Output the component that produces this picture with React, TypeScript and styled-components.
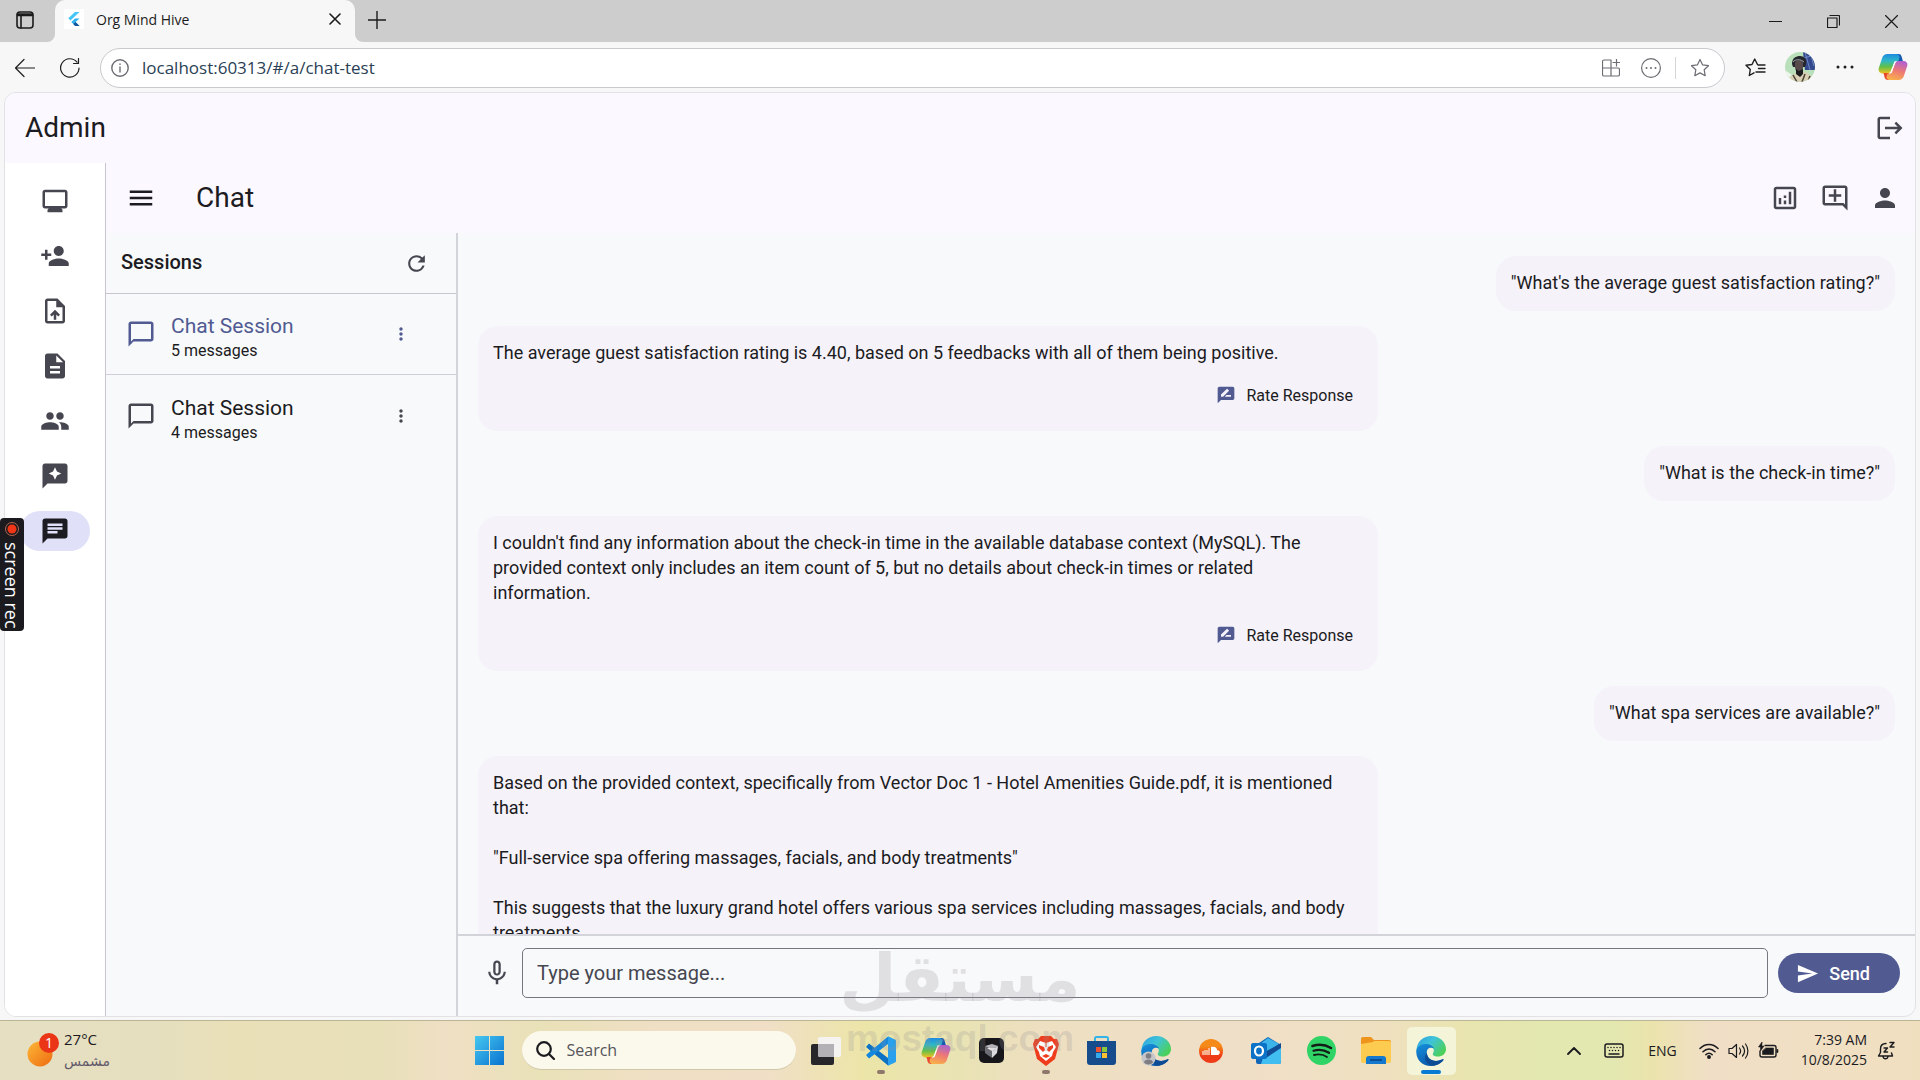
import React from "react";
import styled, { createGlobalStyle, css } from "styled-components";
import {
  MdMonitor, MdPersonAdd, MdUploadFile, MdDescription, MdPeople, MdReviews, MdChat, MdMenu, MdLogout,
  MdOutlineAnalytics, MdOutlineAddComment, MdPerson, MdRefresh, MdChatBubbleOutline, MdMoreVert,
  MdRateReview, MdMicNone, MdSend,
} from "react-icons/md";

const ui = `"Open Sans", "Noto Sans", sans-serif`;
const roboto = `Roboto, "Open Sans", sans-serif`;

const Global = createGlobalStyle`
  *, *::before, *::after { box-sizing: border-box; }
  html, body, #root { height: 100%; margin: 0; }
  body { overflow: hidden; background: #f7f7f7; }
  button { border: 0; padding: 0; background: none; color: inherit; font: inherit; cursor: pointer; }
  h1, h2, p { margin: 0; font-weight: 400; }
  ul { margin: 0; padding: 0; list-style: none; }
  svg { display: block; flex: none; }
`;

const Desktop = styled.div`
  position: relative;
  height: 100vh;
  display: flex;
  flex-direction: column;
  font-family: ${ui};
`;

/* ---------- browser chrome ---------- */
const TabStrip = styled.header`
  display: flex;
  height: 42px;
  flex: none;
  background: #cdcdcd;
  color: #1b1b1b;
`;
const IconButton = styled.button<{ $w?: number; $h?: number }>`
  display: grid;
  place-items: center;
  flex: none;
  width: ${(p) => p.$w ?? 40}px;
  height: ${(p) => p.$h ?? 40}px;
`;
const StripLeft = styled.div<{ $grow?: boolean }>`
  display: flex;
  background: #cdcdcd;
  flex: ${(p) => (p.$grow ? "1" : "none")};
  padding-right: ${(p) => (p.$grow ? 0 : 5)}px;
  border-radius: ${(p) => (p.$grow ? "0 0 0 8px" : "0 0 8px 0")};
`;
const TabBack = styled.div`
  display: flex;
  flex: 1;
  background: linear-gradient(#cdcdcd 50%, #f7f7f7 50%);
`;
const Tab = styled.div`
  display: flex;
  align-items: center;
  width: 300px;
  padding: 0 8px 4px 9px;
  border-radius: 10px 10px 0 0;
  background: #f7f7f7;
  font-size: 14px;
`;
const TabTitle = styled.span`
  flex: 1;
  margin-left: 12px;
`;
const Favicon = styled.span`
  display: grid;
  place-items: center;
  width: 20px;
  height: 20px;
  background: #fff;
`;
const WindowButtons = styled.div`
  display: flex;
  margin-left: auto;
`;
const Toolbar = styled.div`
  display: flex;
  align-items: center;
  flex: none;
  height: 50px;
  padding-right: 9px;
  background: #f7f7f7;
  color: #1f1f1f;
`;
const Nav = styled.div`
  display: flex;
  align-items: center;
  gap: 5px;
  padding: 2px 5px 0;
  width: 100px;
`;
const Address = styled.div`
  display: flex;
  align-items: center;
  flex: 1;
  height: 40px;
  margin-top: 2px;
  padding: 0 4px 0 10px;
  border: 1px solid #c9c9ce;
  border-radius: 20px;
  background: #fff;
  color: #6c6c74;
`;
const Url = styled.input`
  flex: 1;
  min-width: 0;
  margin-left: 13px;
  padding: 0;
  border: 0;
  outline: 0;
  background: none;
  font: 17px/24px ${ui};
  color: #2a3f55;
`;
const Divider = styled.span`
  width: 1px;
  height: 22px;
  margin: 0 4px;
  background: #d5d5d8;
`;

/* ---------- web page ---------- */
const Page = styled.main`
  display: flex;
  flex-direction: column;
  flex: 1;
  min-height: 0;
  margin: 0 4px 3px;
  border: 1px solid #e2e2e6;
  border-radius: 12px;
  overflow: hidden;
  background: #f7f9fb;
  font-family: ${roboto};
  color: #1b1b21;
`;
const AppBar = styled.header`
  display: flex;
  align-items: center;
  flex: none;
  height: 70px;
  background: #fbf8ff;
  color: #45464f;
`;
const Title = styled.h1`
  flex: 1;
  padding-bottom: 2px;
  font-size: 28px;
  line-height: 35px;
  color: #1b1b21;
`;
const AdminBar = styled(AppBar)`
  padding-left: 20px;
`;
const ChatBar = styled(AppBar)`
  padding: 0 5px 0 10px;
`;
const ChatTitle = styled(Title)`
  margin-left: 30px;
`;
const Body = styled.div`
  display: flex;
  flex: 1;
  min-height: 0;
`;
const Rail = styled.nav`
  flex: none;
  width: 101px;
  padding-top: 10px;
  border-right: 1px solid #c6c5d0;
  background: #fff;
`;
const RailItem = styled.li`
  display: flex;
  justify-content: center;
  height: 55px;
  align-items: center;
`;
const RailButton = styled.button<{ $active?: boolean }>`
  display: grid;
  place-items: center;
  width: 70px;
  height: 40px;
  border-radius: 20px;
  color: #45464f;
  ${(p) => p.$active && css`background: #e0e1f9; color: #1b1b21;`}
`;
const Workspace = styled.section`
  display: flex;
  flex-direction: column;
  flex: 1;
  min-width: 0;
`;
const Sessions = styled.aside`
  flex: none;
  width: 352px;
  border-right: 2px solid #d3d3da;
`;
const SessionsHead = styled.div`
  display: flex;
  align-items: center;
  justify-content: space-between;
  height: 61px;
  padding: 0 15px;
  border-bottom: 1px solid #c6c5d0;
  color: #45464f;
`;
const SessionsTitle = styled.h2`
  padding-bottom: 2px;
  font-size: 20px;
  font-weight: 500;
  color: #1b1b21;
`;
const Session = styled.li<{ $active?: boolean }>`
  display: flex;
  align-items: center;
  height: 81px;
  padding: 0 30px 0 20px;
  border-bottom: ${(p) => (p.$active ? "1px solid #cfced8" : "0")};
  color: ${(p) => (p.$active ? "#515b92" : "#45464f")};
`;
const SessionLink = styled.a<{ $active?: boolean }>`
  display: flex;
  flex: 1;
  flex-direction: column;
  margin-left: 15px;
  padding-top: 4px;
  font-size: 21px;
  line-height: 30px;
  text-decoration: none;
  color: ${(p) => (p.$active ? "#515b92" : "#1b1b21")};
`;
const Count = styled.span`
  font-size: 16px;
  line-height: 20px;
  color: #1b1b21;
`;
const Conversation = styled.div`
  display: flex;
  flex-direction: column;
  flex: 1;
  min-width: 0;
`;
const Messages = styled.div`
  display: flex;
  flex-direction: column;
  gap: 15px;
  flex: 1;
  min-height: 0;
  padding: 23px 20px 0;
  overflow: hidden;
`;
const Bubble = styled.article<{ $mine?: boolean }>`
  flex: none;
  align-self: ${(p) => (p.$mine ? "flex-end" : "flex-start")};
  width: ${(p) => (p.$mine ? "auto" : "900px")};
  max-width: 100%;
  padding: 14px ${(p) => (p.$mine ? 15 : 25)}px 16px 15px;
  border-radius: 20px;
  background: #f5f2fa;
  font-size: 18px;
  line-height: 25px;
  white-space: pre-wrap;
`;
const RateRow = styled.div`
  display: flex;
  justify-content: flex-end;
  height: 40px;
  margin-top: 10px;
`;
const RateButton = styled.button`
  display: flex;
  align-items: center;
  gap: 10px;
  font-size: 16px;
  color: #1b1b21;
  svg { color: #515b92; }
`;
const Composer = styled.form`
  display: flex;
  align-items: flex-start;
  flex: none;
  height: 82px;
  padding: 12px 15px 0 14px;
  border-top: 2px solid #d3d3da;
  color: #45464f;
`;
const MessageInput = styled.input`
  flex: 1;
  min-width: 0;
  height: 50px;
  margin-right: 10px;
  padding: 0 14px;
  border: 1px solid #767680;
  border-radius: 5px;
  outline: 0;
  background: none;
  font: 20px/28px ${roboto};
  &::placeholder { color: #45464f; opacity: 1; }
`;
const SendButton = styled.button`
  display: flex;
  align-items: center;
  gap: 10px;
  height: 40px;
  margin-top: 5px;
  padding: 0 30px 0 18px;
  border-radius: 20px;
  background: #515b92;
  color: #fff;
  font-size: 18px;
  font-weight: 500;
`;

/* ---------- taskbar ---------- */
const Taskbar = styled.footer`
  display: grid;
  grid-template-columns: 1fr auto 1fr;
  flex: none;
  height: 60px;
  border-top: 1px solid #b9b698;
  background: linear-gradient(90deg, #e6dfc2 0%, #e5dfbf 8%, #e9e0b8 12%, #e8e0b9 20%, #efdfc4 23%,
    #e9e1b8 28%, #efdfc4 34%, #f0dfc6 40%, #ece5a8 45%, #e9e3b4 50%, #eddfc0 54%, #f0dfc8 64%, #efe0c0 72%,
    #e9e4b0 76%, #e3e7b0 80%, #e3e7b0 84%, #ebe3ac 86%, #f0dfc6 89%, #f0dfbf 100%);
  color: #1b1b1f;
  font-size: 15px;
  line-height: 20px;
`;
const Weather = styled.button`
  display: flex;
  align-items: center;
  gap: 4px;
  justify-self: start;
  padding: 0 0 2px 26px;
  text-align: left;
`;
const WeatherText = styled.span`
  display: grid;
  line-height: 22px;
  color: #62596a;
  strong { font-weight: 400; color: #1b1b1f; }
  span { font-family: "DejaVu Sans", sans-serif; font-size: 14px; }
`;
const Dock = styled.div`
  display: flex;
  align-items: center;
`;
const AppButton = styled.button<{ $active?: boolean }>`
  display: grid;
  place-items: center;
  width: 49px;
  height: 48px;
  margin: 0 3px;
  border-radius: 5px;
  background: ${(p) => (p.$active ? "#f4f4d8" : "none")};
`;
const Running = styled.i<{ $active?: boolean }>`
  position: absolute;
  width: ${(p) => (p.$active ? 20 : 8)}px;
  height: 4px;
  margin-top: 43px;
  border-radius: 2px;
  background: ${(p) => (p.$active ? "#0a7bd4" : "#8d786b")};
`;
const SearchBox = styled.label`
  display: flex;
  align-items: center;
  gap: 12px;
  width: 274px;
  height: 39px;
  margin: 0 3px 0 5px;
  padding: 0 14px;
  border-radius: 20px;
  border-bottom: 1px solid #cfc8a8;
  background: #fbf8ec;
`;
const SearchInput = styled.input`
  flex: 1;
  min-width: 0;
  border: 0;
  padding: 0;
  outline: 0;
  background: none;
  font: 16px/22px ${ui};
  &::placeholder { color: #55555b; opacity: 1; }
`;
const Tray = styled.div`
  display: flex;
  align-items: center;
  justify-content: flex-end;
  padding-right: 24px;
`;
const TrayGroup = styled.button<{ $near?: boolean }>`
  display: flex;
  align-items: center;
  gap: 9px;
  margin-left: ${(p) => (p.$near ? 14 : 22)}px;
  font-size: 14px;
`;
const Clock = styled.time`
  margin-left: 22px;
  margin-right: 10px;
  padding-bottom: 2px;
  text-align: right;
  font-size: 14px;
`;

/* ---------- overlays ---------- */
const Recorder = styled.div`
  position: absolute;
  left: 0;
  top: 518px;
  display: flex;
  flex-direction: column;
  align-items: center;
  gap: 6px;
  width: 24px;
  padding: 4px 0;
  height: 113px;
  border-radius: 4px;
  background: #1b1b1f;
  color: #fff;
  font-size: 18px;
  line-height: 24px;
  span { writing-mode: vertical-rl; white-space: nowrap; }
`;
const Watermark = styled.div`
  position: absolute;
  left: 0;
  right: 0;
  bottom: 20px;
  pointer-events: none;
  text-align: center;
  color: rgba(150, 145, 150, 0.24);
`;
const WatermarkArabic = styled.div`
  font: 700 66px/78px "DejaVu Sans", sans-serif;
`;
const WatermarkLatin = styled.div`
  font: 700 37px/42px "Liberation Sans", sans-serif;
`;

/* ---------- drawings ---------- */
const Line = ({ w = 20, h = w, vb = "0 0 20 20", sw = 1.2, children }: any) => (
  <svg width={w} height={h} viewBox={vb} fill="none" stroke="currentColor" strokeWidth={sw} strokeLinecap="round" strokeLinejoin="round">{children}</svg>
);

const Copilot = ({ size = 30 }: { size?: number }) => (
  <svg width={size} height={size} viewBox="0 0 30 30">
    <defs>
      <linearGradient id="cpA" x1="0" y1="0" x2="0" y2="1"><stop offset="0" stopColor="#1e8be0" /><stop offset=".35" stopColor="#2fb7c8" /><stop offset=".65" stopColor="#5fc04a" /><stop offset="1" stopColor="#f6c021" /></linearGradient>
      <linearGradient id="cpB" x1=".6" y1="0" x2=".3" y2="1"><stop offset="0" stopColor="#b35fd0" /><stop offset=".5" stopColor="#ee7a72" /><stop offset="1" stopColor="#f9b04a" /></linearGradient>
    </defs>
    <path d="M17 2h3.500a3 3 0 0 1 3 2.200L25 9.500h-6z" fill="#1559b0" />
    <path d="M9.500 2h9a3 3 0 0 1 2.800 4l-1 3.500h-3.800L13 18.500a4 4 0 0 1-3.800 3H5.500c-4 0-5.500-2.500-4.700-5.500L4 6.500A6 6 0 0 1 9.500 2z" fill="url(#cpA)" />
    <path d="M12.500 28H9.500a3 3 0 0 1-2.800-2.200L5.500 21H11z" fill="#e8482b" />
    <path d="M20.500 28h-9a3 3 0 0 1-2.800-4l1-2.800h3.600L17 12a4 4 0 0 1 3.800-3h3.700c4 0 5.500 2 4.700 5l-3.200 9.500a6 6 0 0 1-5.500 4.500z" fill="url(#cpB)" />
    <path d="M16.800 9.500h2.400a3 3 0 0 0-2.600 2.500l-2.600 8a3 3 0 0 1-2.200 1.500h-1.200a3.500 3.500 0 0 0 2.700-2.700z" fill="#fff" />
  </svg>
);

const Edge = ({ person = false }: { person?: boolean }) => (
  <svg width="30" height="30" viewBox="0 0 30 30">
    <defs>
      <linearGradient id="egTop" x1="0" y1="0" x2="1" y2=".6"><stop offset="0" stopColor="#2b9fe0" /><stop offset=".5" stopColor="#3fc3d8" /><stop offset="1" stopColor="#4bd05a" /></linearGradient>
      <linearGradient id="egLow" x1="0" y1="0" x2=".5" y2="1"><stop offset="0" stopColor="#1590dc" /><stop offset="1" stopColor="#0b58ac" /></linearGradient>
    </defs>
    <path d="M.5 13C1.500 5 8 0 15 0c9 0 15 6.500 15 13 0 5-4 7.500-8 7.500-4 0-6-1.500-5-3.300 2-3 .500-6.700-4-6.700C7 10.500 2 12 .500 17z" fill="url(#egTop)" />
    <path d="M.3 16C.300 11 4.500 8 9.500 8c4 0 7.500 2 8.500 4.500-5-2-8 1-7 5.500 1 5 6 8 12 6.500 2-.500 4-1.500 4.500-1 .700.700-5 6.500-12.500 6.500C6.500 30 .300 24 .300 16z" fill="url(#egLow)" />
    <path d="M11 17c-.500 6.500 7 9.500 14 7 1.500-.600 2.800-1.200 2.500-.300-1 2-5 5.300-9.500 6C10 30 6.500 21 11 17z" fill="#0d4c94" />
    {person && <g><circle cx="7.500" cy="22.500" r="7" fill="#c5c5c8" /><circle cx="7.500" cy="20" r="2.800" fill="#7d7d83" /><path d="M3 26.500c0-4 9-4 9 0-2.500 2.500-6.500 2.500-9 0z" fill="#7d7d83" /></g>}
  </svg>
);

const Flutter = () => (
  <svg width="14" height="16" viewBox="0 0 14 16">
    <path d="M8 1h4.500L3.500 9.500 1.300 7.300z" fill="#45c5f5" />
    <path d="M8 7.500h4.500L8.500 11l4 4H8.200L4.300 11z" fill="#2fb0ee" />
    <path d="M6.300 13l2.200-2 4 4H8.200z" fill="#17569b" />
  </svg>
);

const Avatar = () => (
  <svg width="30" height="30" viewBox="0 0 30 30">
    <clipPath id="av"><circle cx="15" cy="15" r="15" /></clipPath>
    <g clipPath="url(#av)">
      <path d="M0 0h30v30H0z" fill="#b9dfbb" />
      <path d="M0 4l9-4M0 20l6 4" stroke="#eef6ec" strokeWidth="3" />
      <path d="M18 0h12v18H20z" fill="#34488c" />
      <path d="M20 0l5 18M25 0l4 14M18 6l12-3" stroke="#7088c8" />
      <path d="M3 30c1-6 5-8 9-9l8-1c5 2 7 5 7 10z" fill="#d8cfb4" />
      <path d="M8 23l4 7M20 22l-3 8M25 24l-2 5" stroke="#4a4238" strokeWidth="1.500" />
      <path d="M7 12c0-6 4-8 8-8 5 0 7 4 6 8l-1 3H8z" fill="#26272d" />
      <path d="M10 10c2-2 7-2 8 0v5c0 4-2 6-4 6s-4-3-4-6z" fill="#574b4c" />
      <path d="M8 10c2-3 8-3 11 0" stroke="#9ba8a8" fill="none" />
      <path d="M11 17l3 2 4-2v5l-3 3-4-3z" fill="#1c1c20" />
    </g>
  </svg>
);

const Windows = () => (
  <svg width="29" height="29" viewBox="0 0 29 29">
    <defs><linearGradient id="win" x1="0" y1="0" x2="29" y2="29" gradientUnits="userSpaceOnUse"><stop offset="0" stopColor="#45c8f0" /><stop offset="1" stopColor="#0a72d0" /></linearGradient></defs>
    <path d="M0 0h14v14H0zM15 0h14v14H15zM0 15h14v14H0zM15 15h14v14H15z" fill="url(#win)" />
  </svg>
);
const TaskView = () => (
  <svg width="30" height="28" viewBox="0 0 30 28">
    <rect y="7" width="23" height="21" rx="2" fill="#26262b" />
    <rect x="7" width="23" height="20" rx="2" fill="#f4f3f2" />
    <path d="M7 7h16v13H9a2 2 0 0 1-2-2z" fill="#b3b1b6" />
  </svg>
);
const VsCode = () => (
  <svg width="30" height="30" viewBox="0 0 30 30">
    <path d="M3 7.500L22 22v7.500L.800 11.800c-.700-.600-.700-1.200 0-1.800z" fill="#0d72c4" />
    <path d="M3 22.500L22 8V.500L.800 18.200c-.700.600-.700 1.200 0 1.800z" fill="#1388dc" />
    <path d="M22 .3l7 3.200c.700.300 1 .800 1 1.500v20c0 .700-.300 1.200-1 1.500l-7 3.200z" fill="#2ba0ec" />
  </svg>
);
const Cursor = () => (
  <svg width="25" height="25" viewBox="0 0 25 25">
    <rect width="25" height="25" rx="5" fill="#17171b" />
    <path d="M6 8l7-2 6 2-6 4z" fill="#b8b8be" /><path d="M6 8l7 4v8l-7-5z" fill="#6c6c74" /><path d="M19 8l-6 4v8l5-5z" fill="#dcdce0" /><path d="M8 10h9l-4 3z" fill="#f2f2f4" />
  </svg>
);
const Brave = () => (
  <svg width="26" height="30" viewBox="0 0 26 30">
    <path d="M8 0h10l3 3h3l2 5-1 4-3 11-9 7-9-7L1 12 0 8l2-5h3z" fill="#ee3c1c" />
    <path d="M7 5l6 2 6-2 4 6-3 5-1 4-6 5-6-5-1-4-3-5z" fill="#fff" />
    <path d="M6 9l5 2 1 3-2 2-4-4zM20 9l-5 2-1 3 2 2 4-4zM9 20l4-2 4 2-4 2z" fill="#ee3c1c" />
    <path d="M13 6v5" stroke="#ee3c1c" />
  </svg>
);
const Store = () => (
  <svg width="29" height="30" viewBox="0 0 29 30">
    <path d="M8 7V2.500C8 1.500 8.500 1 9.500 1h10c1 0 1.500.500 1.500 1.500V7" stroke="#32b4e8" strokeWidth="2" fill="none" />
    <path d="M0 5h29v21a3 3 0 0 1-3 3H3a3 3 0 0 1-3-3z" fill="#174c8c" />
    <path d="M9 11h5v5H9z" fill="#f05030" /><path d="M15 11h5v5h-5z" fill="#8cc83c" /><path d="M9 17h5v5H9z" fill="#38a8ec" /><path d="M15 17h5v5h-5z" fill="#fcc030" />
  </svg>
);
const SoundCloud = () => (
  <svg width="24" height="24" viewBox="0 0 24 24">
    <defs><linearGradient id="sc" x1="0" y1="0" x2="0" y2="1"><stop offset=".3" stopColor="#f58a18" /><stop offset=".7" stopColor="#ee3c18" /></linearGradient></defs>
    <circle cx="12" cy="12" r="12" fill="url(#sc)" />
    <path d="M12 8c4-1 6 1 6.200 3.200 3.500-.500 3.500 4.800 0 4.800H12z" fill="#fff" />
    <path d="M4 12v4M6 11v5M8 11v5M10 9v7" stroke="#fbd6c0" strokeWidth="1.400" />
  </svg>
);
const Outlook = () => (
  <svg width="30" height="27" viewBox="0 0 30 27">
    <path d="M5 8L17 0l13 8v17a2 2 0 0 1-2 2H7a2 2 0 0 1-2-2z" fill="#1266b8" />
    <path d="M9 7L17 1l11 6-13 9z" fill="#3cb4ea" /><path d="M13 18L30 8v17a2 2 0 0 1-2 2H10z" fill="#42bdf0" /><path d="M14 15L30 6v5L15 21z" fill="#124c94" />
    <rect y="6" width="16" height="16" rx="2" fill="#0b72c8" /><ellipse cx="8" cy="14" rx="4" ry="4.500" stroke="#fff" strokeWidth="2.200" fill="none" />
  </svg>
);
const Spotify = () => (
  <svg width="29" height="29" viewBox="0 0 29 29" fill="none" stroke="#141c18" strokeLinecap="round">
    <circle cx="14.500" cy="14.500" r="14.500" fill="#30d466" stroke="none" />
    <path d="M5.500 10c6-2 13-1.300 18.500 2" strokeWidth="2.600" /><path d="M6.500 14.800c5-1.500 11-.800 15.500 2" strokeWidth="2.200" /><path d="M7 19c4.500-1 9.500-.500 13 2" strokeWidth="1.800" />
  </svg>
);
const Folder = () => (
  <svg width="30" height="27" viewBox="0 0 30 27">
    <path d="M0 2a2 2 0 0 1 2-2h8l3 3h15a2 2 0 0 1 2 2v4H0z" fill="#ee941c" />
    <path d="M0 7l12-2 1-1h15a2 2 0 0 1 2 2v18a2 2 0 0 1-2 2H2a2 2 0 0 1-2-2z" fill="#fccb50" />
    <path d="M5 27v-5a3 3 0 0 1 3-3h14a3 3 0 0 1 3 3v5z" fill="#1478cc" /><path d="M9 23h12" stroke="#0b4f98" strokeWidth="2" />
  </svg>
);
const Sun = () => (
  <svg width="34" height="36" viewBox="0 0 34 36">
    <defs><linearGradient id="sun" x1="0" y1="0" x2="1" y2="1"><stop offset="0" stopColor="#fcb838" /><stop offset="1" stopColor="#ee6a10" /></linearGradient></defs>
    <circle cx="14" cy="22" r="12.500" fill="url(#sun)" />
    <circle cx="23" cy="11" r="10" fill="#ea3617" />
    <text x="23" y="16" textAnchor="middle" fill="#fff" fontFamily="Open Sans" fontSize="14">1</text>
  </svg>
);

/* ---------- data ---------- */
const rail = [
  ["Overview", MdMonitor], ["Add user", MdPersonAdd], ["Upload file", MdUploadFile], ["Documents", MdDescription],
  ["Users", MdPeople], ["Reviews", MdReviews], ["Chat", MdChat],
] as const;

const sessions = [{ name: "Chat Session", count: "5 messages" }, { name: "Chat Session", count: "4 messages" }];

const messages = [
  { mine: true, text: `"What's the average guest satisfaction rating?"` },
  { text: "The average guest satisfaction rating is 4.40, based on 5 feedbacks with all of them being positive." },
  { mine: true, text: `"What is the check-in time?"` },
  { text: "I couldn't find any information about the check-in time in the available database context (MySQL). The provided context only includes an item count of 5, but no details about check-in times or related information." },
  { mine: true, text: `"What spa services are available?"` },
  { text: `Based on the provided context, specifically from Vector Doc 1 - Hotel Amenities Guide.pdf, it is mentioned that:\n\n"Full-service spa offering massages, facials, and body treatments"\n\nThis suggests that the luxury grand hotel offers various spa services including massages, facials, and body treatments.` },
];

const apps: { name: string; icon: React.ReactNode; running?: boolean; active?: boolean }[] = [
  { name: "Task view", icon: <TaskView /> },
  { name: "Visual Studio Code", icon: <VsCode />, running: true },
  { name: "Copilot", icon: <Copilot /> },
  { name: "Cursor", icon: <Cursor /> },
  { name: "Brave", icon: <Brave />, running: true },
  { name: "Microsoft Store", icon: <Store /> },
  { name: "Edge profile", icon: <Edge person /> },
  { name: "SoundCloud", icon: <SoundCloud /> },
  { name: "Outlook", icon: <Outlook /> },
  { name: "Spotify", icon: <Spotify /> },
  { name: "File Explorer", icon: <Folder /> },
  { name: "Edge", icon: <Edge />, running: true, active: true },
];

const star = "M10 1.500l2.600 5.400 5.900.800-4.300 4.100 1 5.900L10 14.900l-5.200 2.800 1-5.900L1.500 7.700l5.900-.800z";

export default function App() {
  return (
    <Desktop>
      <Global />
      <TabStrip>
        <TabBack>
          <StripLeft>
            <IconButton aria-label="Tab actions" $w={50}>
              <Line w={18} vb="0 0 18 18" sw={1.6}><rect x="1" y="1" width="16" height="16" rx="3" /><path d="M1.500 3h15M1.500 4.500h15M5 5v12" /></Line>
            </IconButton>
          </StripLeft>
          <Tab>
            <Favicon><Flutter /></Favicon>
            <TabTitle>Org Mind Hive</TabTitle>
            <IconButton aria-label="Close tab" $w={24}><Line w={12} vb="0 0 12 12" sw={1.6}><path d="M1 1l10 10M11 1L1 11" /></Line></IconButton>
          </Tab>
          <StripLeft $grow>
            <IconButton aria-label="New tab" $w={44}><Line w={18} vb="0 0 18 18" sw={1.4}><path d="M9 0v18M0 9h18" /></Line></IconButton>
            <WindowButtons>
              <IconButton aria-label="Minimize" $w={58} $h={42}><Line w={13} vb="0 0 13 13"><path d="M0 6.500h13" /></Line></IconButton>
              <IconButton aria-label="Restore" $w={58} $h={42}><Line w={13} vb="0 0 13 13"><path d="M.5 3h9.500v9.500H.500zM3 .500h8.500a1 1 0 0 1 1 1V10" /></Line></IconButton>
              <IconButton aria-label="Close" $w={58} $h={42}><Line w={13} vb="0 0 13 13"><path d="M.5.500l12 12M12.500.500l-12 12" /></Line></IconButton>
            </WindowButtons>
          </StripLeft>
        </TabBack>
      </TabStrip>

      <Toolbar>
        <Nav>
          <IconButton aria-label="Back"><Line><path d="M19.500 10H.800M9 1.500L.500 10 9 18.500" /></Line></IconButton>
          <IconButton aria-label="Reload"><Line><path d="M19 10a9.200 9.200 0 1 1-2-5.800M18.500.500v5h-5" /></Line></IconButton>
        </Nav>
        <Address>
          <Line w={18} vb="0 0 18 18" sw={1.4}><circle cx="9" cy="9" r="8.200" /><path d="M9 8v5M9 5v.400" /></Line>
          <Url aria-label="Address" defaultValue="localhost:60313/#/a/chat-test" />
          <IconButton aria-label="Apps"><Line w={18} vb="0 0 18 18"><path d="M2 1h7v16H2a1.500 1.500 0 0 1-1.500-1.500v-13A1.500 1.500 0 0 1 2 1zM.500 9h15.500a1.500 1.500 0 0 1 1.500 1.500v5A1.500 1.500 0 0 1 16 17H9M14.500 0v7M11 3.500h7" /></Line></IconButton>
          <IconButton aria-label="More page actions"><Line><circle cx="10" cy="10" r="9.400" /><path d="M5.500 10h.010M10 10h.010M14.500 10h.010" strokeWidth="2" /></Line></IconButton>
          <Divider />
          <IconButton aria-label="Add to favourites"><Line><path d={star} /></Line></IconButton>
        </Address>
        <IconButton aria-label="Favourites" $w={60}><Line w={21} vb="0 0 21 20" sw={1.4}><path d="M12.500 7L9.700 1.500 7 7l-6 .800L5.300 12l-1 6L9 15.300M13 7.500h7M13.500 11h6.500M11 14.500h9" /></Line></IconButton>
        <IconButton aria-label="Profile" $w={30}><Avatar /></IconButton>
        <IconButton aria-label="Menu" $w={60}><Line w={18} vb="0 0 18 18" sw={3}><path d="M2 9h.010M9 9h.010M16 9h.010" /></Line></IconButton>
        <IconButton aria-label="Copilot" $w={36}><Copilot /></IconButton>
      </Toolbar>

      <Page>
        <AdminBar>
          <Title>Admin</Title>
          <IconButton aria-label="Log out" $w={50}><MdLogout size={30} /></IconButton>
        </AdminBar>
        <Body>
          <Rail aria-label="Sections">
            <ul>
              {rail.map(([name, Icon]) => (
                <RailItem key={name}>
                  <RailButton aria-label={name} $active={name === "Chat"}><Icon size={30} /></RailButton>
                </RailItem>
              ))}
            </ul>
          </Rail>
          <Workspace>
            <ChatBar>
              <IconButton aria-label="Toggle sessions" $w={50}><MdMenu size={30} color="#1b1b21" /></IconButton>
              <ChatTitle as="h2">Chat</ChatTitle>
              <IconButton aria-label="Analytics" $w={50}><MdOutlineAnalytics size={30} /></IconButton>
              <IconButton aria-label="New chat" $w={50}><MdOutlineAddComment size={30} /></IconButton>
              <IconButton aria-label="Account" $w={50}><MdPerson size={30} /></IconButton>
            </ChatBar>
            <Body>
              <Sessions>
                <SessionsHead>
                  <SessionsTitle>Sessions</SessionsTitle>
                  <IconButton aria-label="Refresh sessions" $w={50}><MdRefresh size={25} /></IconButton>
                </SessionsHead>
                <ul>
                  {sessions.map((s, i) => (
                    <Session key={s.count} $active={i === 0}>
                      <MdChatBubbleOutline size={30} />
                      <SessionLink href="#" $active={i === 0}>{s.name}<Count>{s.count}</Count></SessionLink>
                      <IconButton aria-label="Session options" $w={50}><MdMoreVert size={20} /></IconButton>
                    </Session>
                  ))}
                </ul>
              </Sessions>
              <Conversation>
                <Messages>
                  {messages.map((m) => (
                    <Bubble key={m.text} $mine={m.mine}>
                      <p>{m.text}</p>
                      {!m.mine && <RateRow><RateButton><MdRateReview size={20} />Rate Response</RateButton></RateRow>}
                    </Bubble>
                  ))}
                </Messages>
                <Composer onSubmit={(e) => e.preventDefault()}>
                  <IconButton type="button" aria-label="Voice input" $w={50} $h={50}><MdMicNone size={30} /></IconButton>
                  <MessageInput aria-label="Message" placeholder="Type your message..." />
                  <SendButton><MdSend size={23} />Send</SendButton>
                </Composer>
              </Conversation>
            </Body>
          </Workspace>
        </Body>
      </Page>

      <Taskbar>
        <Weather>
          <Sun />
          <WeatherText><strong>27°C</strong><span lang="ar">مشمس</span></WeatherText>
        </Weather>
        <Dock>
          <AppButton aria-label="Start"><Windows /></AppButton>
          <SearchBox>
            <Line w={19} vb="0 0 19 19" sw={2.2}><circle cx="8" cy="8" r="6.800" /><path d="M13 13l5 5" /></Line>
            <SearchInput aria-label="Search" placeholder="Search" />
          </SearchBox>
          {apps.map((a) => (
            <AppButton key={a.name} aria-label={a.name} $active={a.active}>
              {a.icon}
              {a.running && <Running $active={a.active} />}
            </AppButton>
          ))}
        </Dock>
        <Tray>
          <IconButton aria-label="Hidden icons"><Line w={14} h={8} vb="0 0 14 8" sw={1.8}><path d="M1 7l6-6 6 6" /></Line></IconButton>
          <IconButton aria-label="Keyboard"><Line w={20} h={15} vb="0 0 20 15" sw={1.5}><rect x="1" y="1" width="18" height="13" rx="2" /><path d="M4 4.500h.010M7 4.500h.010M10 4.500h.010M13 4.500h.010M16 4.500h.010M5.500 7.500h.010M8.500 7.500h.010M11.500 7.500h.010M14.500 7.500h.010M5 11h10" /></Line></IconButton>
          <TrayGroup $near>ENG</TrayGroup>
          <TrayGroup aria-label="Network, volume and battery">
            <Line w={20} h={16} vb="0 0 20 16" sw={1.5}><path d="M1 5.500c5-5.500 13-5.500 18 0M4 8.800c3.500-3.800 8.500-3.800 12 0M6.800 11.800c2-2.200 4.400-2.200 6.400 0" /><circle cx="10" cy="14" r="1.200" fill="currentColor" /></Line>
            <Line w={21} h={18} vb="0 0 21 18" sw={1.2}><path d="M1 6.500h3l4.500-4v13L4 11.500H1zM11.500 6c1.500 2 1.500 4 0 6M14.500 4c2.500 3 2.500 7 0 10M17.500 2c3.200 4 3.200 10 0 14" /></Line>
            <Line w={21} h={17} vb="0 0 21 17" sw={1.4}><path d="M7 3.500h9a2 2 0 0 1 2 2v7.500a2 2 0 0 1-2 2H4a2 2 0 0 1-2-2V9" /><path d="M8 6h7.500v6.500h-11V9zM4 0L.500 5h2v4L6 4H4zM19 7.500h1v3h-1z" fill="currentColor" strokeWidth=".600" /></Line>
          </TrayGroup>
          <Clock>7:39 AM<br />10/8/2025</Clock>
          <Line w={19} h={20} vb="0 0 19 20" sw={1.4}><path d="M9 2.500C5 2.500 3.500 5 3.500 8v3.500L1.500 15h14l-1-3M6 15.500c.500 3 4.500 3 5 0M7 7h3.500L7 11h3.500M13 1.500h4l-4 4.500h4" /></Line>
        </Tray>
      </Taskbar>

      <Recorder>
        <svg width="14" height="14" viewBox="0 0 14 14"><circle cx="7" cy="7" r="6.500" fill="none" stroke="#b5654f" /><circle cx="7" cy="7" r="4.500" fill="#f03616" /></svg>
        <span>screen rec</span>
      </Recorder>
      <Watermark>
        <WatermarkArabic lang="ar">مستقل</WatermarkArabic>
        <WatermarkLatin>mostaql.com</WatermarkLatin>
      </Watermark>
    </Desktop>
  );
}
